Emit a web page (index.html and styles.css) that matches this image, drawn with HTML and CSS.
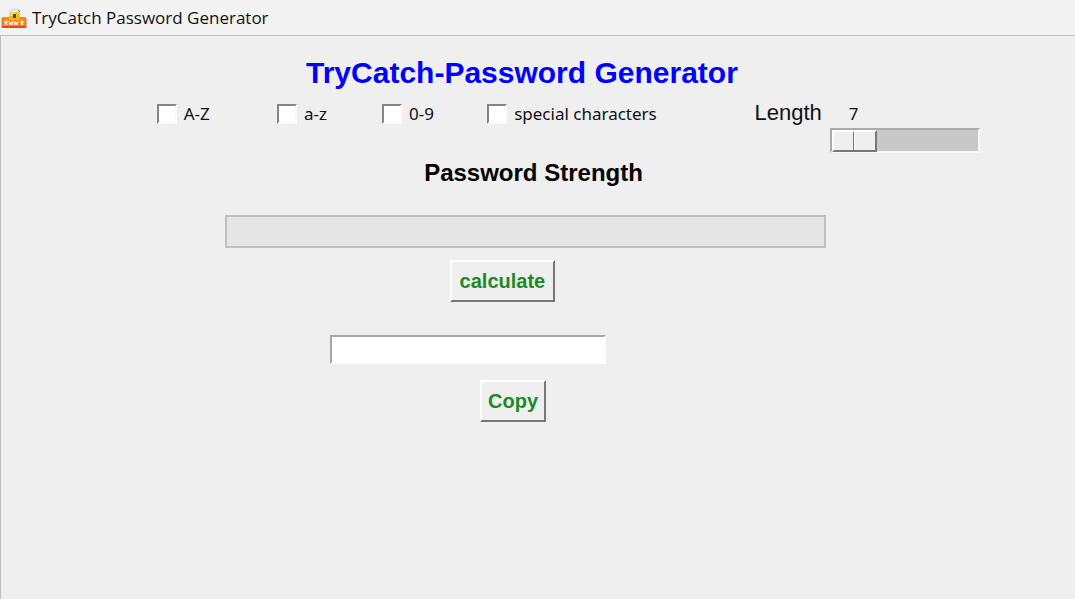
FILE: index.html
```html
<!DOCTYPE html>
<html lang="en">
<head>
<meta charset="utf-8">
<meta name="viewport" content="width=device-width, initial-scale=1">
<title>TryCatch Password Generator</title>
<link rel="stylesheet" href="styles.css">
</head>
<body>
<header class="titlebar">
  <svg class="app-icon" viewBox="0 0 26 22" aria-hidden="true">
    <path d="M9 6Q10 2 14 2T19 5" fill="none" stroke="#d3e2f7" stroke-width="2"/>
    <path d="M17 3L19 5" stroke="#9a5fb5" stroke-width="1"/>
    <rect x="8" y="5" width="11" height="8" rx="1" fill="#fbc51b"/>
    <rect x="8" y="5" width="6" height="4" fill="#ffda3c"/>
    <rect x="12" y="7" width="3" height="3" fill="#54430f"/>
    <rect x="1" y="10" width="24" height="11" rx="1" fill="#f9861f"/>
    <path d="M1 20H25" stroke="#de4b16" stroke-width="2"/>
    <path d="M1 11V21M25 11V21" stroke="#f36a17" stroke-width="1"/>
    <rect x="8" y="9" width="11" height="4" fill="#fbb51b"/>
    <rect x="12" y="8" width="3" height="3" fill="#54430f"/>
    <path d="M3 15H7M5 13V15L4 18M5 15L6 18M8 14L9 18L10 15L11 18L12 14M13 14L14 18L15 15L16 18L17 14M19 15H23M21 13V15L20 18M21 15L22 18" fill="none" stroke="#fff1d2" stroke-width="1"/>
  </svg>
  <span class="titlebar-text">TryCatch Password Generator</span>
</header>
<main class="window">
  <h1 class="heading">TryCatch-Password Generator</h1>
  <form class="options">
    <label class="option option-upper"><input class="check" type="checkbox">A-Z</label>
    <label class="option option-lower"><input class="check" type="checkbox">a-z</label>
    <label class="option option-digits"><input class="check" type="checkbox">0-9</label>
    <label class="option option-special"><input class="check" type="checkbox">special characters</label>
    <label class="length-label" for="length">Length</label>
    <div class="scale">
      <output class="scale-value" for="length">7</output>
      <input class="scale-input" id="length" type="range" min="7" max="30" value="7">
    </div>
  </form>
  <h2 class="strength-title">Password Strength</h2>
  <div class="strength-bar" role="progressbar" aria-label="Password Strength" aria-valuemin="0" aria-valuemax="100" aria-valuenow="0"></div>
  <button class="button button-calculate" type="button">calculate</button>
  <input class="password" type="text" aria-label="Password">
  <button class="button button-copy" type="button">Copy</button>
</main>
</body>
</html>
```

FILE: styles.css
```css
* {
  box-sizing: border-box;
}

body {
  margin: 0;
  min-height: 100vh;
  display: flex;
  flex-direction: column;
  background: #efefef;
  color: #111111;
  font-family: "Liberation Sans", Arial, sans-serif;
}

.titlebar {
  display: flex;
  align-items: center;
  gap: 5px;
  height: 35px;
  padding-left: 1px;
  background: #f3f3f3;
}

.app-icon {
  width: 26px;
  height: 22px;
}

.titlebar-text {
  font-family: "Open Sans", "Noto Sans", sans-serif;
  font-size: 17px;
  line-height: 24px;
}

.window {
  flex: 1;
  display: flex;
  flex-direction: column;
  align-items: flex-start;
  border-top: 1px solid #bdbdbd;
  border-left: 1px solid #bdbdbd;
}

.heading {
  margin: 19px 0 0 28.4%;
  color: #0000ff;
  font-size: 30px;
  line-height: 36px;
}

.options {
  display: grid;
  grid-template-columns: 120fr 105fr 105fr 267fr 75fr 245fr;
  align-items: start;
  width: 100%;
  padding-left: 14.5%;
  margin-top: 9px;
}

.option {
  display: flex;
  align-items: center;
  gap: 7px;
  padding-top: 2px;
  font-family: "Noto Sans", sans-serif;
  font-size: 17px;
  line-height: 24px;
  white-space: nowrap;
}

.check {
  appearance: none;
  width: 20px;
  height: 20px;
  margin: 0;
  border: 2px solid;
  border-color: #858585 #fafafa #fafafa #858585;
  background: #ffffff;
}

.check:checked {
  background: linear-gradient(#333333, #333333) center / 8px 8px no-repeat #ffffff;
}

.length-label {
  font-size: 22px;
  line-height: 26px;
}

.scale {
  display: flex;
  flex-direction: column;
}

.scale-value {
  padding-left: 19px;
  font-family: "Noto Sans", sans-serif;
  font-size: 17px;
  line-height: 28px;
}

.scale-input {
  appearance: none;
  width: 150px;
  height: 25px;
  margin: 0 0 1px;
  border: 2px solid;
  border-color: #ababab #f8f8f8 #f8f8f8 #ababab;
  background: #c8c8c8;
}

.scale-input::-webkit-slider-thumb {
  appearance: none;
  width: 45px;
  height: 22px;
  border: 2px solid;
  border-color: #ffffff #777777 #777777 #ffffff;
  background: linear-gradient(90deg, #efefef 19px, #777777 19px, #777777 20px, #ffffff 20px, #ffffff 21px, #efefef 21px);
}

.strength-title {
  margin: 4px 0 0 39.4%;
  color: #000000;
  font-size: 24px;
  line-height: 30px;
}

.strength-bar {
  width: 55.9%;
  height: 33px;
  margin: 27px 0 0 20.9%;
  border: 2px solid #c0c0c0;
  background: #e5e5e5;
}

.button {
  height: 42px;
  padding: 0;
  border: 2px solid;
  border-color: #ffffff #777777 #777777 #ffffff;
  background: #efefef;
  color: #1c8a24;
  font-family: inherit;
  font-size: 20px;
  font-weight: 700;
  line-height: 24px;
}

.button-calculate {
  width: 105px;
  margin: 12px 0 0 41.8%;
}

.password {
  width: 25.7%;
  height: 29px;
  margin: 33px 0 0 30.6%;
  border: 2px solid;
  border-color: #a8a8a8 #ffffff #ffffff #a8a8a8;
  background: #ffffff;
  font-size: 20px;
}

.button-copy {
  width: 66px;
  margin: 16px 0 0 44.6%;
}
```
